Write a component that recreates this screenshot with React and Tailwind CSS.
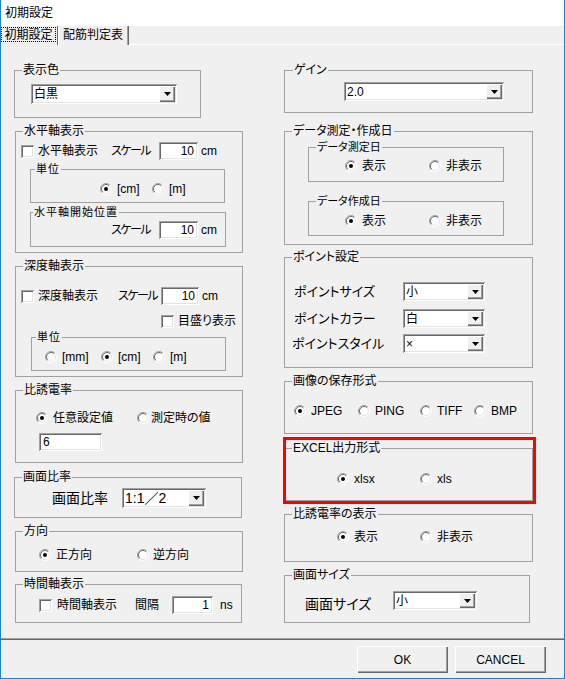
import React from "react";

const sunken =
  "shadow-[inset_1px_1px_0_#a0a0a0,inset_-1px_-1px_0_#ffffff,inset_2px_2px_0_#696969,inset_-2px_-2px_0_#e3e3e3]";
const raised =
  "shadow-[inset_1px_1px_0_#ffffff,inset_-1px_-1px_0_#696969,inset_-2px_-2px_0_#a0a0a0]";

function Legend({ children, className = "ml-[7px]" }) {
  return <div className={`-mt-[8px] w-fit bg-[#f0f0f0] px-[1px] leading-[14px] ${className}`}>{children}</div>;
}

function Check() {
  return <span className={`block h-[13px] w-[13px] shrink-0 bg-white ${sunken}`} />;
}

function Radio({ on }) {
  return (
    <svg width="12" height="12" viewBox="0 0 12 12" className="shrink-0">
      <circle cx="6" cy="6" r="5.5" fill="#fff" />
      <path d="M2.1 9.9A5.5 5.5 0 0 1 9.9 2.1" fill="none" stroke="#a0a0a0" />
      <path d="M2.8 9.2A4.5 4.5 0 0 1 9.2 2.8" fill="none" stroke="#696969" />
      <path d="M9.9 2.1A5.5 5.5 0 0 1 2.1 9.9" fill="none" stroke="#ffffff" />
      <path d="M9.2 2.8A4.5 4.5 0 0 1 2.8 9.2" fill="none" stroke="#e3e3e3" />
      {on && <circle cx="6" cy="6" r="2" fill="#000" />}
    </svg>
  );
}

function Opt({ on, label, className = "", gap = "ml-[5px]" }) {
  return (
    <div className={`flex shrink-0 items-center ${className}`}>
      <Radio on={on} />
      <span className={gap}>{label}</span>
    </div>
  );
}

function Field({ value, className = "" }) {
  return <div className={`flex h-[18px] shrink-0 items-center bg-white px-[4px] ${sunken} ${className}`}>{value}</div>;
}

function Combo({ value, className = "", textClass = "" }) {
  return (
    <div className={`flex shrink-0 bg-white p-[2px] ${sunken} ${className}`}>
      <span className={`flex flex-1 items-center pl-[1px] ${textClass}`}>{value}</span>
      <span className={`flex w-[16px] items-center justify-center bg-[#f0f0f0] ${raised}`}>
        <svg width="7" height="4" viewBox="0 0 7 4">
          <path d="M0 0h7L3.5 4z" fill="#000" />
        </svg>
      </span>
    </div>
  );
}

function Btn({ children }) {
  return (
    <button className={`flex h-[27px] w-[91px] items-center justify-center bg-[#f0f0f0] ${raised}`}>{children}</button>
  );
}

export default function App() {
  return (
    <div className="h-[679px] w-[565px] overflow-hidden whitespace-nowrap border-x border-b border-[#1883d7] bg-[#f0f0f0] text-[12px] leading-[14px] text-black [font-family:'Liberation_Sans','Noto_Sans_CJK_JP',sans-serif] [font-feature-settings:'palt']">
      {/* title */}
      <div className="flex h-[26px] items-center bg-white pl-[4px]">初期設定</div>

      {/* tabs */}
      <div className="flex h-[19px]">
        <div className="h-[19px] w-[57px] border-r border-[#696969] pt-[1px]">
          <div className="flex h-[15px] w-[55px] items-center justify-center border border-dotted border-black">初期設定</div>
        </div>
        <div className="flex h-[19px] w-[71px] items-center border-l border-r border-l-white border-r-[#696969] pb-[2px] pl-[4px] shadow-[inset_-1px_0_0_#a0a0a0]">
          配筋判定表
        </div>
        <div className="flex-1 border-b border-white" />
      </div>

      {/* panel */}
      <div className="flex h-[593px] pl-[13px] pt-[25px]">
        {/* left column */}
        <div className="flex w-[229px] flex-col">
          <div className="h-[48px] w-[187px] border border-[#a0a0a0]">
            <Legend>表示色</Legend>
            <Combo value="白黒" className="ml-[16px] mt-[7px] h-[20px] w-[146px]" />
          </div>

          <div className="ml-[1px] mt-[13px] h-[122px] w-[228px] border border-[#a0a0a0]">
            <Legend>水平軸表示</Legend>
            <div className="mt-[4px] flex h-[18px] items-center">
              <div className="flex w-[95px] shrink-0 items-center pl-[5px]">
                <Check />
                <span className="ml-[4px]">水平軸表示</span>
              </div>
              <span className="w-[48px] shrink-0 tracking-[-1.5px]">スケール</span>
              <Field value="10" className="w-[39px] justify-end" />
              <span className="ml-[3px]">cm</span>
            </div>
            <div className="ml-[14px] mt-[9px] h-[34px] w-[195px] border border-[#a0a0a0]">
              <Legend className="ml-[4px] text-[11px] tracking-[1px]">単位</Legend>
              <div className="mt-[6px] flex h-[14px] items-center pl-[69px]">
                <Opt on label="[cm]" className="w-[52px]" />
                <Opt label="[m]" />
              </div>
            </div>
            <div className="ml-[14px] mt-[9px] h-[35px] w-[196px] border border-[#a0a0a0]">
              <Legend className="ml-[2px] text-[11px] tracking-[1px]">水平軸開始位置</Legend>
              <div className="mt-[2px] flex h-[18px] items-center pl-[80px]">
                <span className="w-[48px] shrink-0 tracking-[-1.5px]">スケール</span>
                <Field value="10" className="w-[39px] justify-end" />
                <span className="ml-[3px]">cm</span>
              </div>
            </div>
          </div>

          <div className="ml-[1px] mt-[13px] h-[111px] w-[228px] border border-[#a0a0a0]">
            <Legend>深度軸表示</Legend>
            <div className="mt-[14px] flex h-[18px] items-center">
              <div className="flex w-[102px] shrink-0 items-center pl-[5px]">
                <Check />
                <span className="ml-[4px]">深度軸表示</span>
              </div>
              <span className="w-[43px] shrink-0 tracking-[-1.5px]">スケール</span>
              <Field value="10" className="w-[38px] justify-end" />
              <span className="ml-[3px]">cm</span>
            </div>
            <div className="mt-[9px] flex h-[14px] items-center pl-[145px]">
              <Check />
              <span className="ml-[4px]">目盛り表示</span>
            </div>
            <div className="ml-[15px] mt-[9px] h-[34px] w-[195px] border border-[#a0a0a0]">
              <Legend className="ml-[4px] text-[11px] tracking-[1px]">単位</Legend>
              <div className="mt-[6px] flex h-[14px] items-center pl-[13px]">
                <Opt label="[mm]" className="w-[56px]" />
                <Opt on label="[cm]" className="w-[52px]" />
                <Opt label="[m]" />
              </div>
            </div>
          </div>

          <div className="ml-[1px] mt-[13px] h-[73px] w-[228px] border border-[#a0a0a0]">
            <Legend>比誘電率</Legend>
            <div className="mt-[14px] flex h-[14px] items-center pl-[20px]">
              <Opt on label="任意設定値" className="w-[101px]" />
              <Opt label="測定時の値" gap="ml-[2px]" />
            </div>
            <Field value="6" className="ml-[23px] mt-[8px] w-[63px]" />
          </div>

          <div className="mt-[14px] h-[41px] w-[228px] border border-[#a0a0a0]">
            <Legend>画面比率</Legend>
            <div className="mt-[4px] flex h-[20px] items-center pl-[37px]">
              <span className="w-[70px] shrink-0 text-[14px]">画面比率</span>
              <Combo value="1:1／2" className="h-[20px] w-[84px]" textClass="text-[14px]" />
            </div>
          </div>

          <div className="ml-[1px] mt-[13px] h-[41px] w-[228px] border border-[#a0a0a0]">
            <Legend>方向</Legend>
            <div className="mt-[10px] flex h-[14px] items-center pl-[23px]">
              <Opt on label="正方向" className="w-[98px]" />
              <Opt label="逆方向" gap="ml-[4px]" />
            </div>
          </div>

          <div className="ml-[1px] mt-[12px] h-[39px] w-[227px] border border-[#a0a0a0]">
            <Legend>時間軸表示</Legend>
            <div className="mt-[5px] flex h-[18px] items-center pl-[23px]">
              <div className="flex w-[96px] shrink-0 items-center">
                <Check />
                <span className="ml-[5px]">時間軸表示</span>
              </div>
              <span className="w-[37px] shrink-0">間隔</span>
              <Field value="1" className="w-[41px] justify-end" />
              <span className="ml-[7px]">ns</span>
            </div>
          </div>
        </div>

        {/* right column */}
        <div className="relative ml-[41px] flex w-[249px] flex-col">
          <div className="h-[43px] w-full border border-[#a0a0a0]">
            <Legend className="ml-[8px]">ゲイン</Legend>
            <Combo value="2.0" className="ml-[59px] mt-[5px] h-[19px] w-[160px]" />
          </div>

          <div className="mt-[18px] h-[114px] w-full border border-[#a0a0a0]">
            <Legend>データ測定・作成日</Legend>
            <div className="ml-[23px] mt-[9px] h-[35px] w-[196px] border border-[#a0a0a0]">
              <Legend className="ml-[7px] text-[11px]">データ測定日</Legend>
              <div className="mt-[5px] flex h-[14px] items-center pl-[36px]">
                <Opt on label="表示" className="w-[84px]" />
                <Opt label="非表示" />
              </div>
            </div>
            <div className="ml-[23px] mt-[19px] h-[35px] w-[196px] border border-[#a0a0a0]">
              <Legend className="ml-[7px] text-[11px]">データ作成日</Legend>
              <div className="mt-[6px] flex h-[14px] items-center pl-[36px]">
                <Opt on label="表示" className="w-[84px]" />
                <Opt label="非表示" />
              </div>
            </div>
          </div>

          <div className="mt-[12px] h-[111px] w-full border border-[#a0a0a0]">
            <Legend>ポイント設定</Legend>
            <div className="mt-[18px] flex h-[19px] items-center pl-[9px]">
              <span className="w-[109px] shrink-0 text-[13px]">ポイントサイズ</span>
              <Combo value="小" className="h-[19px] w-[82px]" />
            </div>
            <div className="mt-[8px] flex h-[19px] items-center pl-[9px]">
              <span className="w-[109px] shrink-0 text-[13px]">ポイントカラー</span>
              <Combo value="白" className="h-[19px] w-[82px]" />
            </div>
            <div className="mt-[6px] flex h-[19px] items-center pl-[7px]">
              <span className="w-[111px] shrink-0 text-[13px]">ポイントスタイル</span>
              <Combo value="×" className="h-[19px] w-[82px]" />
            </div>
          </div>

          <div className="mt-[13px] h-[53px] w-full border border-[#a0a0a0]">
            <Legend>画像の保存形式</Legend>
            <div className="mt-[16px] flex h-[14px] items-center pl-[9px]">
              <Opt on label="JPEG" className="w-[64px]" />
              <Opt label="PING" className="w-[62px]" />
              <Opt label="TIFF" className="w-[54px]" />
              <Opt label="BMP" />
            </div>
          </div>

          <div className="mt-[14px] h-[53px] w-full border border-[#a0a0a0]">
            <Legend>EXCEL出力形式</Legend>
            <div className="mt-[17px] flex h-[14px] items-center pl-[52px]">
              <Opt on label="xlsx" className="w-[83px]" />
              <Opt label="xls" />
            </div>
          </div>

          <div className="mt-[13px] h-[48px] w-full border border-[#a0a0a0]">
            <Legend>比誘電率の表示</Legend>
            <div className="mt-[9px] flex h-[14px] items-center pl-[52px]">
              <Opt on label="表示" className="w-[83px]" />
              <Opt label="非表示" />
            </div>
          </div>

          <div className="mt-[13px] h-[48px] w-[246px] border border-[#a0a0a0]">
            <Legend>画面サイズ</Legend>
            <div className="mt-[9px] flex h-[19px] items-center pl-[20px]">
              <span className="mt-[6px] w-[88px] shrink-0 text-[14px]">画面サイズ</span>
              <Combo value="小" className="h-[19px] w-[84px]" />
            </div>
          </div>

          {/* annotation */}
          <div className="pointer-events-none absolute left-[-1px] top-[367px] h-[67px] w-[253px] border-[3px] border-[#ff0000]" />
        </div>
      </div>

      {/* separator */}
      <div className="h-[2px] border-y border-t-[#a0a0a0] border-b-[#696969]" />

      {/* buttons */}
      <div className="flex justify-end gap-[7px] pr-[18px] pt-[6px]">
        <Btn>OK</Btn>
        <Btn>CANCEL</Btn>
      </div>
    </div>
  );
}
